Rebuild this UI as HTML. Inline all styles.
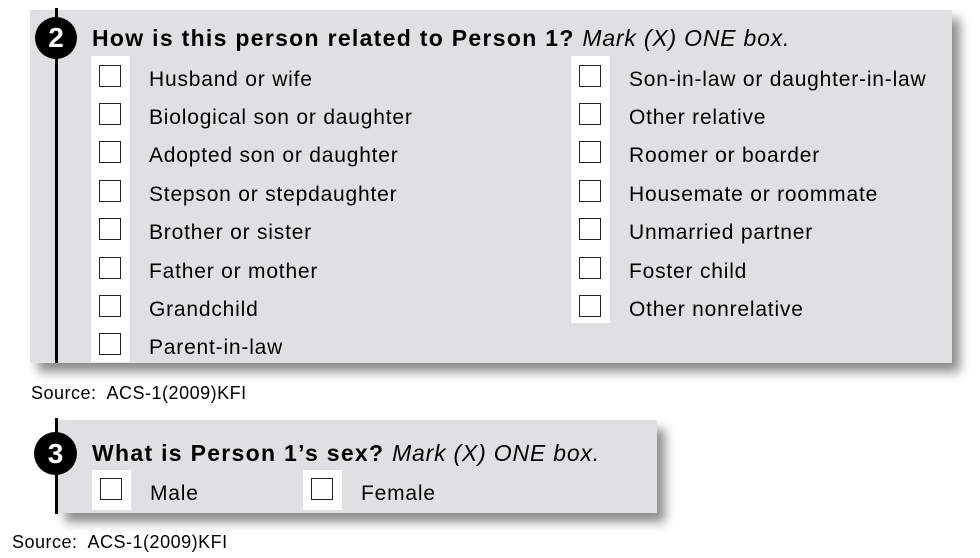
<!DOCTYPE html>
<html><head><style>
body{margin:0;width:980px;height:558px;background:#fff;position:relative;overflow:hidden;font-family:"Liberation Sans",Arial,sans-serif;color:#000}
.p{position:absolute;background:#dfe0e2;box-shadow:8px 9px 10px rgba(0,0,0,.45)}
.ln{position:absolute;background:#000;width:3px}
.c{position:absolute;background:#000;border-radius:50%;color:#fff;font-weight:bold;text-align:center}
.ws{position:absolute;background:#fff}
.cb{position:absolute;width:22px;height:22px;border:1px solid #222;background:#fff;box-sizing:border-box}
.t{position:absolute;font-size:21px;letter-spacing:0.8px;white-space:nowrap;line-height:1}
.h{position:absolute;font-size:23px;font-weight:bold;letter-spacing:1.3px;white-space:nowrap;line-height:1}
.h i{font-weight:normal;letter-spacing:0.8px}
.s{position:absolute;font-size:18px;letter-spacing:0.5px;white-space:nowrap;line-height:1}
</style></head><body>
<div class="p" style="left:30px;top:10px;width:922px;height:353px"></div>
<div class="ln" style="left:55px;top:8px;height:355px"></div>
<div class="c" style="left:35px;top:17px;width:42px;height:42px;font-size:28px;line-height:42px">2</div>
<div class="h" style="left:92px;top:27px">How is this person related to Person 1? <i>Mark (X) ONE box.</i></div>
<div class="ws" style="left:91px;top:56px;width:39px;height:306px"></div>
<div class="ws" style="left:571px;top:56px;width:39px;height:267px"></div>
<div class="cb" style="left:99px;top:65px"></div><div class="t" style="left:149px;top:69px">Husband or wife</div>
<div class="cb" style="left:99px;top:103px"></div><div class="t" style="left:149px;top:107px">Biological son or daughter</div>
<div class="cb" style="left:99px;top:141px"></div><div class="t" style="left:149px;top:145px">Adopted son or daughter</div>
<div class="cb" style="left:99px;top:180px"></div><div class="t" style="left:149px;top:184px">Stepson or stepdaughter</div>
<div class="cb" style="left:99px;top:218px"></div><div class="t" style="left:149px;top:222px">Brother or sister</div>
<div class="cb" style="left:99px;top:257px"></div><div class="t" style="left:149px;top:261px">Father or mother</div>
<div class="cb" style="left:99px;top:295px"></div><div class="t" style="left:149px;top:299px">Grandchild</div>
<div class="cb" style="left:99px;top:333px"></div><div class="t" style="left:149px;top:337px">Parent-in-law</div>
<div class="cb" style="left:579px;top:65px"></div><div class="t" style="left:629px;top:69px">Son-in-law or daughter-in-law</div>
<div class="cb" style="left:579px;top:103px"></div><div class="t" style="left:629px;top:107px">Other relative</div>
<div class="cb" style="left:579px;top:141px"></div><div class="t" style="left:629px;top:145px">Roomer or boarder</div>
<div class="cb" style="left:579px;top:180px"></div><div class="t" style="left:629px;top:184px">Housemate or roommate</div>
<div class="cb" style="left:579px;top:218px"></div><div class="t" style="left:629px;top:222px">Unmarried partner</div>
<div class="cb" style="left:579px;top:257px"></div><div class="t" style="left:629px;top:261px">Foster child</div>
<div class="cb" style="left:579px;top:295px"></div><div class="t" style="left:629px;top:299px">Other nonrelative</div>
<div class="s" style="left:31px;top:384px">Source:&nbsp; ACS-1(2009)KFI</div>

<div class="p" style="left:57px;top:420px;width:600px;height:93px"></div>
<div class="ln" style="left:55px;top:418px;height:96px"></div>
<div class="c" style="left:34px;top:432px;width:43px;height:43px;font-size:28px;line-height:43px">3</div>
<div class="h" style="left:92px;top:442px">What is Person 1’s sex? <i>Mark (X) ONE box.</i></div>
<div class="ws" style="left:92px;top:470px;width:39px;height:40px"></div>
<div class="ws" style="left:303px;top:470px;width:39px;height:40px"></div>
<div class="cb" style="left:100px;top:478px"></div><div class="t" style="left:150px;top:483px">Male</div>
<div class="cb" style="left:311px;top:478px"></div><div class="t" style="left:361px;top:483px">Female</div>
<div class="s" style="left:12px;top:533px">Source:&nbsp; ACS-1(2009)KFI</div>
</body></html>
